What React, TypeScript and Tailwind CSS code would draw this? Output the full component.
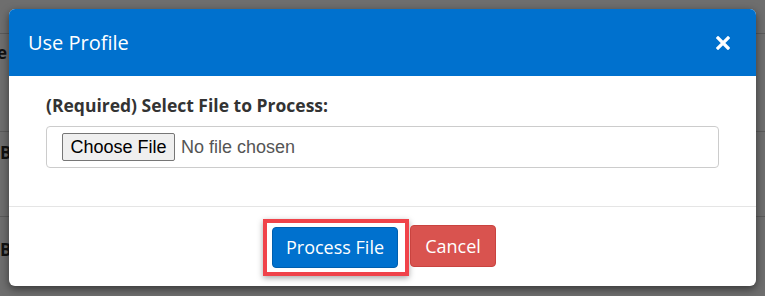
import React from 'react';

// Backdrop page content, dimmed by the modal overlay
const BackdropRows = () => (
  <div className="absolute inset-0 text-[#111] font-bold text-[17px]" style={{ fontFamily: '"Open Sans", sans-serif' }}>
    <div className="border-b border-[#5a5a5a] h-[34px]" />
    <div className="h-[36px] pt-[6px]">
      <span className="-ml-[3px]">e</span>
    </div>
    <div className="border-b border-[#5a5a5a] h-[62px]" />
    <div className="h-[38px] pt-[8px]">B</div>
    <div className="border-b border-[#5a5a5a] h-[47px]" />
    <div className="pt-[20px]">B</div>
  </div>
);

const CloseIcon = () => (
  <svg width="14" height="14" viewBox="0 0 14 14" aria-hidden>
    <path d="M2 2 L12 12 M12 2 L2 12" stroke="#fff" strokeWidth="3.2" strokeLinecap="square" />
  </svg>
);

export default function App() {
  return (
    <div className="relative w-[765px] h-[296px] overflow-hidden bg-[#6e6e6e]">
      <BackdropRows />
      <div
        className="relative ml-[9px] mt-[9px] w-[747px] h-[277px] bg-white rounded-[6px] overflow-hidden shadow-[0_3px_9px_rgba(0,0,0,0.5)] flex flex-col"
        style={{ fontFamily: '"Open Sans", sans-serif' }}
      >
        <div className="h-[67px] bg-[#0071ce] flex items-center justify-between pl-[19px] pr-[26px] text-white">
          <span className="text-[20px] leading-none">Use Profile</span>
          <CloseIcon />
        </div>
        <div className="px-[37px] pt-[18px] h-[131px] border-b border-[#e5e5e5]">
          <div className="text-[17.5px] font-bold text-[#333] leading-[22px] mb-[10px]">
            (Required) Select File to Process:
          </div>
          <div className="w-[673px] h-[42px] border border-[#ccc] rounded-[4px] flex items-center pl-[15px]" style={{ fontFamily: '"Liberation Sans", Arial, sans-serif' }}>
            <span className="h-[28px] w-[113px] flex items-center justify-center bg-[#efefef] border border-[#767676] rounded-[2px] text-[18px] text-black">
              Choose File
            </span>
            <span className="ml-[6px] text-[18px] text-[#555]">No file chosen</span>
          </div>
        </div>
        <div className="flex-1 flex items-center justify-center pr-[6px] pt-[2px]">
          <div className="border-[4px] border-[#f0434a] py-[4px] pl-[5px] pr-[7px] bg-white shadow-[0_2px_6px_rgba(0,0,0,0.35)]">
            <div className="w-[126px] h-[41px] bg-[#0071ce] border border-[#005fae] rounded-[4px] flex items-center justify-center text-white text-[18px]">
              Process File
            </div>
          </div>
          <div className="ml-[1px] -mt-[3px] w-[86px] h-[42px] bg-[#d9534f] border border-[#c9433f] rounded-[4px] flex items-center justify-center text-white text-[18px]">
            Cancel
          </div>
        </div>
      </div>
    </div>
  );
}
